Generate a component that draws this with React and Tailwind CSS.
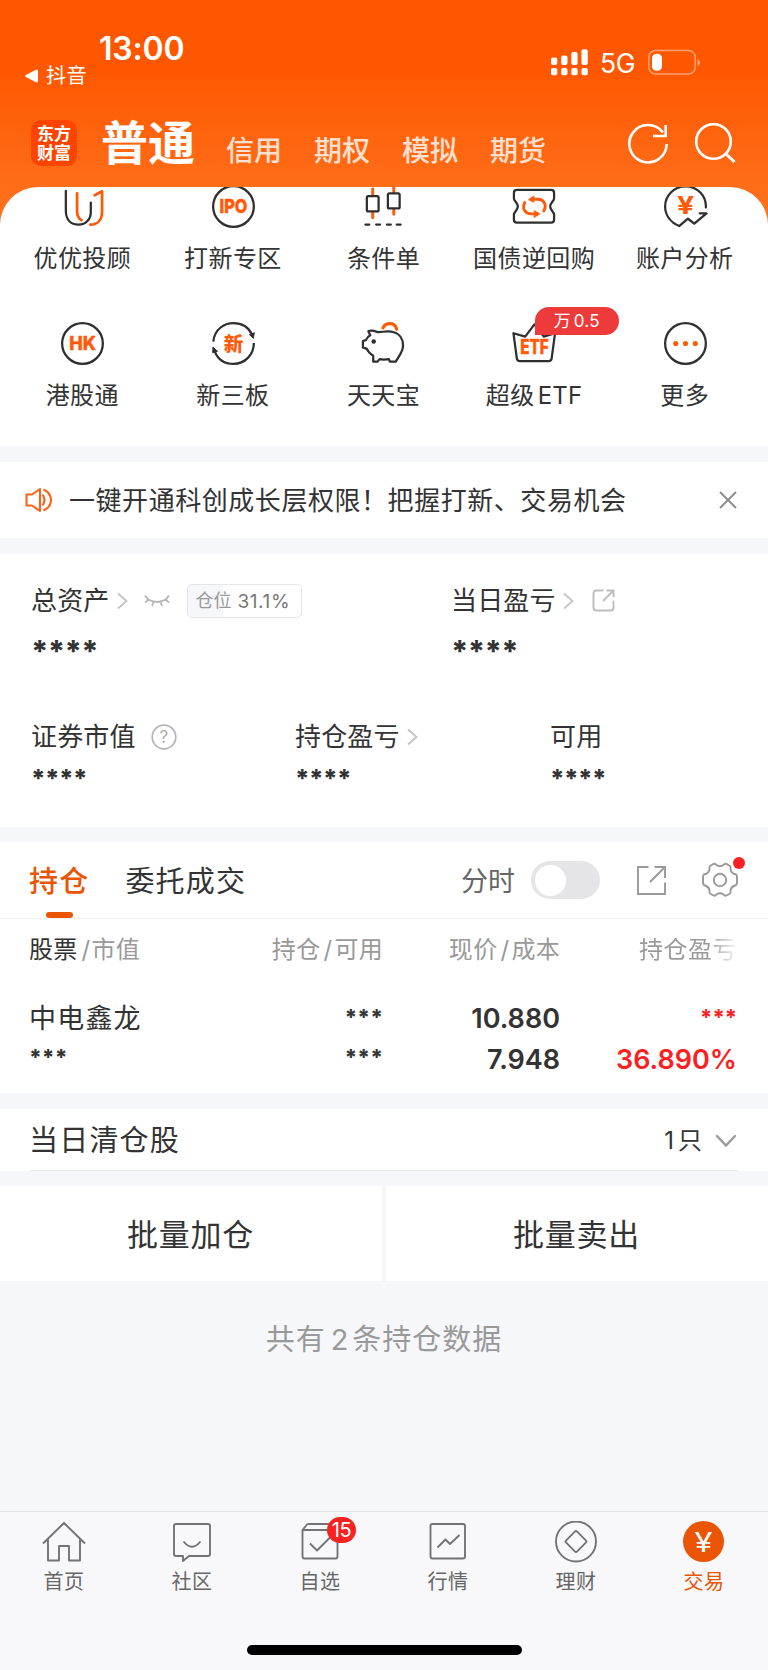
import React, { useState } from 'react';

const DARK = '#2f2f2f';
const ORANGE = '#ff5a0a';

function UuIcon() {
  return (
    <svg width="48" height="48" viewBox="0 0 48 48" fill="none" strokeWidth="2.300" strokeLinecap="round" strokeLinejoin="round">
      <path d="M7.500 8V28C7.500 38 13 42.500 20.500 42.500S33 37 33 29.500V20" stroke={DARK} />
      <path d="M19 10.500V29C19 34 20.500 36 23.500 38" stroke={ORANGE} strokeWidth="2.800" />
      <path d="M37 12.500L44.500 8.500V29C44.500 37.500 40 42.500 32.500 42.500" stroke={ORANGE} strokeWidth="2.800" />
    </svg>
  );
}

function IpoIcon() {
  return (
    <svg width="48" height="48" viewBox="0 0 48 48" fill="none">
      <circle cx="24.500" cy="24" r="20.800" stroke={DARK} strokeWidth="2.300" />
      <text x="24.500" y="31" textAnchor="middle" fontSize="19.500" fontWeight="800" textLength="28.500" lengthAdjust="spacingAndGlyphs" fill={ORANGE} stroke={ORANGE} strokeWidth="0.500">IPO</text>
    </svg>
  );
}

function ConditionIcon() {
  return (
    <svg width="48" height="48" viewBox="0 0 48 48" fill="none" strokeWidth="2.300" strokeLinecap="round">
      <path d="M13.500 6V13M13.500 30V35.500M35 2V9.500M35 27V32" stroke={ORANGE} strokeWidth="3" />
      <rect x="7.500" y="13.500" width="12" height="15.500" rx="1.500" stroke={DARK} />
      <rect x="29" y="10.500" width="12" height="15.500" rx="1.500" stroke={DARK} />
      <path d="M6 42.500H10M17 42.500H21M28 42.500H32M38 42.500H42" stroke={DARK} />
    </svg>
  );
}

function BondIcon() {
  return (
    <svg width="48" height="48" viewBox="0 0 48 48" fill="none" strokeLinecap="round" strokeLinejoin="round">
      <path d="M6.500 7H41.500Q44.500 7 44.500 10V16C44.500 18 40.500 20.500 40.500 24S44.500 30 44.500 32V37.500Q44.500 40.500 41.500 40.500H6.500Q3.500 40.500 3.500 37.500V32C3.500 30 7.500 27.500 7.500 24S3.500 18 3.500 16V10Q3.500 7 6.500 7Z" stroke={DARK} strokeWidth="2.300" />
      <path d="M14.500 20C11.500 26.500 15 31.500 21 31.500H26M34 28.500C37.500 22.500 34 16.500 28 16.500H22" stroke={ORANGE} strokeWidth="3" />
      <path d="M23.500 13.500L18.500 17L23.500 19.500ZM24.500 28.500L30 31.500L24.500 35Z" fill={ORANGE} stroke={ORANGE} />
    </svg>
  );
}

function AccountIcon() {
  return (
    <svg width="48" height="48" viewBox="0 0 48 48" fill="none" strokeWidth="2.300" strokeLinecap="round" strokeLinejoin="round">
      <path d="M45.300 25C46 13 36.500 3.500 24.500 3.500C12.500 3.500 3.700 13 3.700 24C3.700 33.500 10 40.500 18 44L27 36.500L33.500 41.500L46 31H39" stroke={DARK} />
      <text x="24.700" y="31.500" textAnchor="middle" fontSize="25.500" fontWeight="700" textLength="17.500" lengthAdjust="spacingAndGlyphs" fill={ORANGE}>¥</text>
    </svg>
  );
}

function HkIcon() {
  return (
    <svg width="48" height="48" viewBox="0 0 48 48" fill="none">
      <circle cx="24.500" cy="24" r="20.800" stroke={DARK} strokeWidth="2.300" />
      <text x="24.800" y="31" textAnchor="middle" fontSize="19" fontWeight="800" textLength="27.500" lengthAdjust="spacingAndGlyphs" fill={ORANGE} stroke={ORANGE} strokeWidth="0.400">HK</text>
    </svg>
  );
}

function XsbIcon() {
  return (
    <svg width="48" height="48" viewBox="0 0 48 48" fill="none" strokeWidth="2.300">
      <path d="M3.900 22C5 9.500 15 3.200 24.500 3.200C33 3.200 40 7.500 43.500 15M45.300 23.500C45.300 35.500 36 44.800 24.500 44.800C15.500 44.800 8.500 40 5.300 32" stroke={DARK} />
      <path d="M40.800 15L45.800 13L44.800 18.700ZM3.500 27.700L8.200 32L3.300 33.400Z" fill={DARK} stroke={DARK} strokeWidth="1" strokeLinejoin="round" />
      <text x="24.500" y="31.200" textAnchor="middle" fontSize="20" fontWeight="900" fill={ORANGE}>新</text>
    </svg>
  );
}

function PigIcon() {
  return (
    <svg width="48" height="48" viewBox="0 0 48 48" fill="none" strokeLinejoin="round" strokeLinecap="round">
      <path d="M24 12C28.500 11.500 32 11.500 35 12.500C41 14 44.500 19.500 44.500 26C44.500 32 41 36 37 42.500H31L30 40C26 40.500 23 40.500 20.500 40L18.500 42.500H14V36.500C10.500 34.500 8.500 32 7.500 29.500L3.500 28V21.500L6.500 20.500C7.500 18 9 16.500 11 15.500L9 11.500C12 10 16 11.500 19 12.500Z" stroke={DARK} strokeWidth="2.300" />
      <path d="M24 8C27 2 36.500 2 38 9.500" stroke={ORANGE} strokeWidth="3.200" />
      <circle cx="14.500" cy="22" r="2.300" fill={DARK} />
    </svg>
  );
}

function EtfIcon() {
  return (
    <svg width="48" height="48" viewBox="0 0 48 48" fill="none">
      <path d="M3 13.500L15 17L24.500 4.500L34 17L45.500 13.500L42 39.500Q41.700 42 39 42H9.500Q6.800 42 6.500 39.500Z" stroke={DARK} strokeWidth="2.300" strokeLinejoin="round" />
      <text x="24.500" y="35" textAnchor="middle" fontSize="20" fontWeight="800" textLength="29" lengthAdjust="spacingAndGlyphs" fill={ORANGE} stroke={ORANGE} strokeWidth="0.500">ETF</text>
    </svg>
  );
}

function MoreIcon() {
  return (
    <svg width="48" height="48" viewBox="0 0 48 48" fill="none">
      <circle cx="24.500" cy="24" r="20.800" stroke={DARK} strokeWidth="2.300" />
      <g fill={ORANGE}>
        <circle cx="14.500" cy="24" r="2.600" />
        <circle cx="24.500" cy="24" r="2.600" />
        <circle cx="34.500" cy="24" r="2.600" />
      </g>
    </svg>
  );
}

const quickEntries = [
  { id: 'uu', name: '优优投顾', icon: UuIcon },
  { id: 'ipo', name: '打新专区', icon: IpoIcon },
  { id: 'cond', name: '条件单', icon: ConditionIcon },
  { id: 'bond', name: '国债逆回购', icon: BondIcon },
  { id: 'account', name: '账户分析', icon: AccountIcon },
  { id: 'hk', name: '港股通', icon: HkIcon },
  { id: 'xsb', name: '新三板', icon: XsbIcon },
  { id: 'ttb', name: '天天宝', icon: PigIcon },
  { id: 'etf', name: '超级', suffix: 'ETF', icon: EtfIcon, badge: true },
  { id: 'more', name: '更多', icon: MoreIcon },
];

const accountTabs = ['信用', '期权', '模拟', '期货'];

function Chevron({ className }) {
  return (
    <svg className={className} width="11" height="18" viewBox="0 0 11 18" fill="none" stroke="#c4c4c4" strokeWidth="1.800">
      <path d="M1 1.500L9.500 9L1 16.500" />
    </svg>
  );
}

function StatusBar() {
  return (
    <div className="flex h-[96px] justify-between pl-[25px] pr-[67px] text-white">
      <div>
        <div className="ml-[74px] mt-[32px] text-[32px] leading-[33px] font-semibold tracking-[-0.2px]">13:00</div>
        <div className="mt-px flex items-center text-[20px] leading-5 tracking-[0.5px]">
          <svg className="mr-[8px]" width="13" height="14" viewBox="0 0 13 14" fill="#fff">
            <path d="M0.800 6L11 0.700Q13 0 13 2V12Q13 14 11 13.300L0.800 8Q-0.500 7 0.800 6Z" />
          </svg>
          抖音
        </div>
      </div>
      <div className="mt-[48px] flex h-7 items-center">
        <svg width="38" height="28" viewBox="0 0 38 28" fill="#fff">
          <rect x="0" y="9.500" width="6.300" height="7.500" rx="2" />
          <rect x="10.200" y="7.500" width="6.300" height="9.500" rx="2" />
          <rect x="20.300" y="4" width="6.300" height="13" rx="2" />
          <rect x="30.500" y="1.300" width="6.300" height="15.700" rx="2" />
          <rect x="0" y="20" width="6.300" height="7.300" rx="2" />
          <rect x="10.200" y="20" width="6.300" height="7.300" rx="2" />
          <rect x="20.300" y="20" width="6.300" height="7.300" rx="2" />
          <rect x="30.500" y="20" width="6.300" height="7.300" rx="2" />
        </svg>
        <span className="ml-[11px] w-[36px] pt-[3px] text-[26.500px] leading-none tracking-[-0.400px]">5G</span>
        <svg className="ml-[12px]" width="53" height="26" viewBox="0 0 53 26" fill="none">
          <rect x="0.800" y="1.500" width="46.500" height="23.500" rx="7" stroke="#fff" strokeOpacity="0.45" strokeWidth="1.500" />
          <rect x="4" y="4.700" width="10" height="17" rx="4.500" fill="#fff" />
          <path d="M49.500 10Q52 11.500 52 13.500T49.500 17Z" fill="#fff" fillOpacity="0.5" />
        </svg>
      </div>
    </div>
  );
}

function Header() {
  return (
    <div className="flex h-[91px] items-start pl-[31px] pr-[32px] text-white">
      <div className="mt-[24px] flex h-[46px] w-[46px] flex-col items-center justify-center rounded-[10px] bg-[#ff4400] pt-px text-[17px] leading-[19px] font-bold">
        <span>东方</span>
        <span>财富</span>
      </div>
      <div className="mt-[23px] ml-[24px] text-[47px] leading-none font-bold">普通</div>
      <div className="mt-[41px] ml-[31px] flex gap-[32px] text-[28px] leading-none font-medium text-white/80">
        {accountTabs.map(t => (
          <span key={t}>{t}</span>
        ))}
      </div>
      <div className="mt-[26px] ml-auto flex gap-[25px]">
        <svg width="42" height="42" viewBox="0 0 42 42" fill="none" stroke="#fff" strokeWidth="2.600">
          <path d="M39.700 22A18.700 18.700 0 1 1 36 10.500" />
          <path d="M38.700 3V14H26" />
        </svg>
        <svg width="42" height="42" viewBox="0 0 42 42" fill="none" stroke="#fff" strokeWidth="2.600">
          <circle cx="19.500" cy="19.500" r="17.300" />
          <path d="M31.500 31.500L40.500 40" strokeWidth="3" />
        </svg>
      </div>
    </div>
  );
}

function QuickPanel() {
  return (
    <div className="h-[259px] overflow-hidden rounded-t-[38px] bg-white pl-[7px] pr-[8px]">
      <div className="-mt-[4px] grid grid-cols-5 gap-y-[49px]">
        {quickEntries.map(({ id, name, suffix, icon: Icon, badge }) => (
          <div key={id} className="relative flex h-[88px] flex-col items-center">
            <Icon />
            <div className="mt-[17px] text-[24px] leading-6 tracking-[0.4px] whitespace-nowrap text-[#333]">
              {name}
              {suffix && <span className="ml-[3px] tracking-[0.2px]">{suffix}</span>}
            </div>
            {badge && (
              <div className="absolute -top-[13px] left-[76px] flex h-[28px] w-[84px] items-center justify-center rounded-[14px] rounded-bl-none bg-[#ed3b3b] pt-px text-[17px] leading-none text-white">
                万<span className="ml-[3px] tracking-[0.3px]">0.5</span>
              </div>
            )}
          </div>
        ))}
      </div>
    </div>
  );
}

function Notice({ onClose }) {
  return (
    <div className="mt-4 flex h-[76px] items-center bg-white pl-[25px] pr-[31px]">
      <svg width="28" height="26" viewBox="0 0 28 26" fill="none" stroke="#ff6114" strokeWidth="2.100" strokeLinejoin="round">
        <path d="M1.500 7.500H7L15 2V24L7 18.500H1.500Z" />
        <path d="M17.500 7.500Q21.500 13 17.500 18.500M18.500 2.500Q26 6 26 13T18.500 23.500" />
      </svg>
      <div className="ml-[16px] pt-0.5 text-[26px] leading-none tracking-[0.55px] whitespace-nowrap text-[#333]">
        一键开通科创成长层权限！把握打新、交易机会
      </div>
      <button onClick={onClose} className="ml-auto">
        <svg width="18" height="18" viewBox="0 0 18 18" fill="none" stroke="#8c8c8c" strokeWidth="2">
          <path d="M1 1L17 17M17 1L1 17" />
        </svg>
      </button>
    </div>
  );
}

function Assets() {
  return (
    <div className="mt-4 h-[273px] bg-white pt-[29px] pl-[31px] text-[26px] leading-none tracking-[0.15px] text-[#333]">
      <div className="flex">
        <div className="w-[420px]">
          <div className="flex h-[34px] items-center pt-px">
            总资产
            <Chevron className="ml-[8px]" />
            <svg className="ml-[16px]" width="26" height="13" viewBox="0 0 26 13" fill="none" stroke="#b5b5b5" strokeWidth="1.700">
              <path d="M1 1.500C6 10 20 10 25 1.500M4.500 5.500L1 8.500M9.500 7.500L8 12M16.500 7.500L18 12M21.500 5.500L25 8.500" />
            </svg>
            <div className="ml-[17px] flex h-[34px] w-[115px] items-center rounded-[5px] border border-[#e4e5e8] bg-[linear-gradient(90deg,#f6f7fa_31.1%,#fff_31.1%)] pt-px pl-[7px] text-[18px] tracking-normal text-[#999]">
              仓位<span className="ml-[6px] text-[19px] tracking-[0.6px] text-[#777]">31.1%</span>
            </div>
          </div>
          <div className="mt-[21px] h-[26px] text-[30px] leading-[26px] font-extrabold tracking-[-0.7px]">****</div>
        </div>
        <div>
          <div className="flex h-[34px] items-center pt-px">
            当日盈亏
            <Chevron className="ml-[7px]" />
            <svg className="ml-[18px]" width="23" height="23" viewBox="0 0 23 23" fill="none" stroke="#bdbdbd" strokeWidth="1.900">
              <path d="M11.500 1.500H4.500Q1.500 1.500 1.500 4.500V18.500Q1.500 21.500 4.500 21.500H18.500Q21.500 21.500 21.500 18.500V11.500M14.500 1.500H21.500V8M21 2L11 12" />
            </svg>
          </div>
          <div className="mt-[21px] h-[26px] text-[30px] leading-[26px] font-extrabold tracking-[-0.7px]">****</div>
        </div>
      </div>
      <div className="mt-[56px] flex">
        <div className="w-[264px]">
          <div className="flex h-[34px] items-center">
            证券市值
            <svg className="ml-[15px]" width="26" height="26" viewBox="0 0 26 26" fill="none">
              <circle cx="13" cy="13" r="11.800" stroke="#b5b5b5" strokeWidth="1.700" />
              <text x="13" y="19" textAnchor="middle" fontSize="17" fill="#aaa">?</text>
            </svg>
          </div>
          <Masked />
        </div>
        <div className="w-[255px]">
          <div className="flex h-[34px] items-center">
            持仓盈亏
            <Chevron className="ml-[7px]" />
          </div>
          <Masked />
        </div>
        <div>
          <div className="flex h-[34px] items-center">可用</div>
          <Masked />
        </div>
      </div>
    </div>
  );
}

function Masked() {
  return <div className="mt-[13px] h-[22px] text-[25px] leading-[22px] font-extrabold tracking-[-0.6px]">****</div>;
}

function Holdings() {
  const [timeshare, setTimeshare] = useState(false);

  return (
    <div className="mt-[15px] h-[251px] bg-white text-[#333]">
      <div className="flex h-[77px] items-center border-b border-[#f0f1f3] pl-[29px] pr-[21px]">
        <div className="relative flex h-full items-center pt-0.5 text-[29px] leading-none font-medium tracking-[1.2px] text-[#ea5504]">
          持仓
          <span className="absolute bottom-0 left-[17px] h-[6px] w-[27px] rounded-[3px] bg-[#ea5504]"></span>
        </div>
        <div className="ml-[36px] pt-0.5 text-[29px] leading-none tracking-[1.2px]">委托成交</div>
        <div className="ml-auto pt-0.5 text-[27px] leading-none text-[#666]">分时</div>
        <button
          onClick={() => setTimeshare(!timeshare)}
          className={'ml-[16px] flex h-[38px] w-[69px] items-center rounded-full bg-[#e5e5e7] px-1 ' + (timeshare ? 'justify-end' : 'justify-start')}
        >
          <span className="h-[31px] w-[31px] rounded-full bg-white"></span>
        </button>
        <svg className="ml-[36px]" width="31" height="31" viewBox="0 0 31 31" fill="none" stroke="#999" strokeWidth="1.900">
          <path d="M12.500 2H2V29H29V17.500M18.500 2H29V13M28.500 2.500L14 17" />
        </svg>
        <div className="relative ml-[34px]">
          <svg width="46" height="38" viewBox="0 0 46 38" fill="none" stroke="#999" strokeWidth="1.900" strokeLinejoin="round">
            <path d="M11.500 3.500Q14 2 15.500 4Q19 6.500 22.500 4Q24 2 26.500 3.500L29 5Q30 6 29.500 8.500Q30.500 12.500 34 13Q36 13.500 36 16V21.500Q36 24 34 24.500Q30.500 25.500 29.500 29Q30 31.500 29 32.500L26.500 34Q24 35.500 22.500 33.500Q19 31 15.500 33.500Q14 35.500 11.500 34L9 32.500Q8 31.500 8.500 29Q7.500 25.500 4 24.500Q2 24 2 21.500V16Q2 13.500 4 13Q7.500 12.500 8.500 8.500Q8 6 9 5Z" />
            <circle cx="19" cy="19" r="6.200" />
          </svg>
          <span className="absolute -top-[4px] right-[2px] h-3 w-3 rounded-full bg-[#f92222]"></span>
        </div>
      </div>
      <div className="grid grid-cols-[200px_154px_177px_177px] pl-[29px]">
        <div className="flex h-[62px] items-center text-[24px] leading-none tracking-[0.3px]">
          股票<span className="ml-[4px] text-[#999]">/<span className="ml-px">市值</span></span>
        </div>
        <div className="flex h-[62px] items-center justify-end text-[24px] leading-none tracking-[0.3px] text-[#999]">
          持仓<span className="mr-[2px] ml-[3px]">/</span>可用
        </div>
        <div className="flex h-[62px] items-center justify-end text-[24px] leading-none tracking-[0.3px] text-[#999]">
          现价<span className="mr-[2px] ml-[3px]">/</span>成本
        </div>
        <div className="flex h-[62px] items-center justify-end text-[24px] leading-none tracking-[0.5px]">
          <span className="bg-[linear-gradient(90deg,#999_70%,#eee_98%)] bg-clip-text text-transparent">持仓盈亏</span>
        </div>

        <div className="pt-[24px]">
          <div className="text-[27px] leading-[28px] tracking-[1.2px]">中电鑫龙</div>
          <div className="mt-[12px] text-[22px] leading-[24px] font-extrabold">***</div>
        </div>
        <div className="pt-[24px] text-right text-[22px] leading-[24px] font-extrabold">
          <div>***</div>
          <div className="mt-[16px]">***</div>
        </div>
        <div className="pt-[24px] text-right text-[27px] leading-[28px] font-semibold">
          <div>10.880</div>
          <div className="mt-[13px]">7.948</div>
        </div>
        <div className="pt-[24px] text-right font-semibold text-[#f92222]">
          <div className="text-[22px] leading-[24px] font-bold">***</div>
          <div className="mt-[17px] text-[27px] leading-[28px]">36.890%</div>
        </div>
      </div>
    </div>
  );
}

const navItems = [
  {
    name: '首页',
    icon: (
      <path d="M1 22.500L22 2L43 22.500M6 18V39.500H17V25H27V39.500H38V18" />
    ),
  },
  {
    name: '社区',
    icon: (
      <path d="M6 3H38Q40 3 40 5V33Q40 35 38 35H19L13 40V35H6Q4 35 4 33V5Q4 3 6 3ZM13.500 20.500Q22 31 30.500 20.500" />
    ),
  },
  {
    name: '自选',
    badge: 15,
    icon: (
      <path d="M9.500 3H34L39 9M4.500 9L9.500 3M4.500 9H39.500V35.500Q39.500 37.500 37.500 37.500H6.500Q4.500 37.500 4.500 35.500ZM12 22.500L19 29.500L32 16.500" />
    ),
  },
  {
    name: '行情',
    icon: (
      <path d="M6.500 3H37Q39 3 39 5V35.500Q39 37.500 37 37.500H6.500Q4.500 37.500 4.500 35.500V5Q4.500 3 6.500 3ZM11.500 26.500L19.500 18.500L24 23L33.500 14" />
    ),
  },
  {
    name: '理财',
    icon: (
      <>
        <circle cx="22" cy="20.500" r="20" />
        <path d="M20.800 10.700Q22 9.500 23.200 10.700L31.800 19.300Q33 20.500 31.800 21.700L23.200 30.300Q22 31.500 20.800 30.300L12.200 21.700Q11 20.500 12.200 19.300Z" />
      </>
    ),
  },
  {
    name: '交易',
    active: true,
    icon: (
      <>
        <circle cx="21.500" cy="20.500" r="20.500" fill="#ea5504" stroke="none" />
        <text x="21.500" y="30.500" textAnchor="middle" fontSize="27" fontWeight="400" textLength="18" lengthAdjust="spacingAndGlyphs" fill="#fff" stroke="none">¥</text>
      </>
    ),
  },
];

function BottomNav() {
  return (
    <div className="mt-auto h-[159px] border-t border-[#e2e4e7] bg-[#f8f8fb]">
      <div className="grid grid-cols-6 pt-[9px]">
        {navItems.map(item => (
          <div key={item.name} className={'relative flex flex-col items-center ' + (item.active ? 'text-[#ea5504]' : 'text-[#666]')}>
            <svg width="44" height="42" viewBox="0 0 44 42" fill="none" stroke="#737373" strokeWidth="1.900" strokeLinejoin="round">
              {item.icon}
            </svg>
            <span className="mt-[9px] text-[20px] leading-5 tracking-[0.5px]">{item.name}</span>
            {item.badge && (
              <span className="absolute -top-[4px] left-[71px] flex h-[26px] w-[29px] items-center justify-center rounded-full bg-[#f92222] text-[20px] leading-none tracking-[-0.5px] text-white">
                {item.badge}
              </span>
            )}
          </div>
        ))}
      </div>
      <div className="mx-auto mt-[53px] h-[10px] w-[275px] rounded-full bg-black"></div>
    </div>
  );
}

const App = () => {
  const [noticeOpen, setNoticeOpen] = useState(true);

  return (
    <div className="flex h-[1670px] w-[768px] flex-col overflow-hidden bg-[#f6f7fa] font-[Inter,'Noto_Sans_CJK_SC',sans-serif]">
      <div className="bg-[linear-gradient(180deg,#ff5700_70px,#ff701c_200px)]">
        <StatusBar />
        <Header />
        <QuickPanel />
      </div>
      {noticeOpen && <Notice onClose={() => setNoticeOpen(false)} />}
      <Assets />
      <Holdings />

      <div className="mt-4 h-[62px] bg-white px-[29px]">
        <div className="flex h-full items-center border-b border-[#eaebed] pt-0.5 pr-[2px] text-[#333]">
          <span className="text-[29px] leading-none tracking-[1.2px]">当日清仓股</span>
          <span className="ml-auto text-[24px] leading-none">1<span className="ml-[4px]">只</span></span>
          <svg className="ml-[13px]" width="22" height="14" viewBox="0 0 22 14" fill="none" stroke="#999" strokeWidth="2.400" strokeLinecap="round">
            <path d="M2 2L11 11.500L20 2" />
          </svg>
        </div>
      </div>

      <div className="mt-[15px] grid h-[95px] grid-cols-2 gap-1 text-[31px] leading-none tracking-[0.8px] text-[#333]">
        <button className="bg-white pt-0.5 pr-px">批量加仓</button>
        <button className="bg-white pt-0.5 pr-px">批量卖出</button>
      </div>

      <div className="mt-[44px] text-center text-[29px] leading-[30px] tracking-[1px] text-[#999]">
        共有<span className="mr-[3px] ml-[5px]">2</span>条持仓数据
      </div>

      <BottomNav />
    </div>
  );
};

export default App;
